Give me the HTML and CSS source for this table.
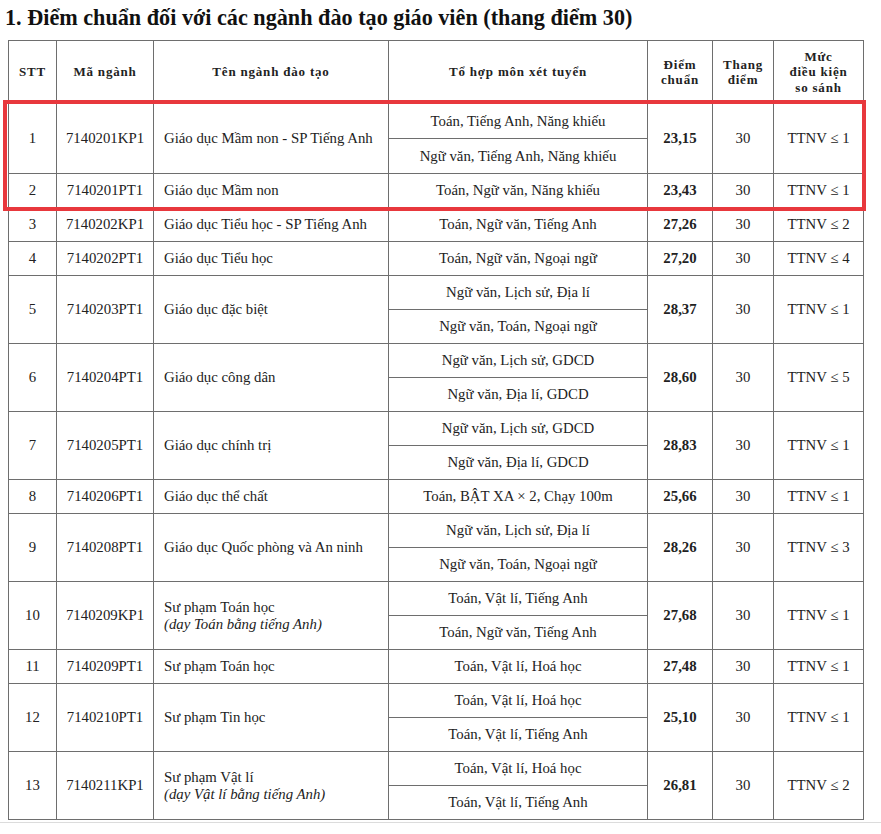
FILE: index.html
```html
<!DOCTYPE html>
<html lang="vi">
<head>
<meta charset="utf-8">
<title>Điểm chuẩn</title>
<link rel="stylesheet" href="styles.css">
</head>
<body>
<div class="page">
  <h1 class="title">1. Điểm chuẩn đối với các ngành đào tạo giáo viên (thang điểm 30)</h1>
  <div class="table-wrap">
    <table class="scores">
      <colgroup>
        <col class="c-stt"><col class="c-ma"><col class="c-ten"><col class="c-to"><col class="c-diem"><col class="c-thang"><col class="c-muc">
      </colgroup>
      <thead>
        <tr>
          <th>STT</th>
          <th>Mã ngành</th>
          <th>Tên ngành đào tạo</th>
          <th>Tổ hợp môn xét tuyển</th>
          <th>Điểm<br>chuẩn</th>
          <th>Thang<br>điểm</th>
          <th>Mức<br>điều kiện<br>so sánh</th>
        </tr>
      </thead>
      <tbody>
        <tr class="tall"><td rowspan="2">1</td><td rowspan="2">7140201KP1</td><td rowspan="2" class="name">Giáo dục Mầm non - SP Tiếng Anh</td><td>Toán, Tiếng Anh, Năng khiếu</td><td rowspan="2" class="score">23,15</td><td rowspan="2">30</td><td rowspan="2">TTNV ≤ 1</td></tr>
        <tr class="tall"><td>Ngữ văn, Tiếng Anh, Năng khiếu</td></tr>
        <tr><td>2</td><td>7140201PT1</td><td class="name">Giáo dục Mầm non</td><td>Toán, Ngữ văn, Năng khiếu</td><td class="score">23,43</td><td>30</td><td>TTNV ≤ 1</td></tr>
        <tr><td>3</td><td>7140202KP1</td><td class="name">Giáo dục Tiểu học - SP Tiếng Anh</td><td>Toán, Ngữ văn, Tiếng Anh</td><td class="score">27,26</td><td>30</td><td>TTNV ≤ 2</td></tr>
        <tr><td>4</td><td>7140202PT1</td><td class="name">Giáo dục Tiểu học</td><td>Toán, Ngữ văn, Ngoại ngữ</td><td class="score">27,20</td><td>30</td><td>TTNV ≤ 4</td></tr>
        <tr><td rowspan="2">5</td><td rowspan="2">7140203PT1</td><td rowspan="2" class="name">Giáo dục đặc biệt</td><td>Ngữ văn, Lịch sử, Địa lí</td><td rowspan="2" class="score">28,37</td><td rowspan="2">30</td><td rowspan="2">TTNV ≤ 1</td></tr>
        <tr><td>Ngữ văn, Toán, Ngoại ngữ</td></tr>
        <tr><td rowspan="2">6</td><td rowspan="2">7140204PT1</td><td rowspan="2" class="name">Giáo dục công dân</td><td>Ngữ văn, Lịch sử, GDCD</td><td rowspan="2" class="score">28,60</td><td rowspan="2">30</td><td rowspan="2">TTNV ≤ 5</td></tr>
        <tr><td>Ngữ văn, Địa lí, GDCD</td></tr>
        <tr><td rowspan="2">7</td><td rowspan="2">7140205PT1</td><td rowspan="2" class="name">Giáo dục chính trị</td><td>Ngữ văn, Lịch sử, GDCD</td><td rowspan="2" class="score">28,83</td><td rowspan="2">30</td><td rowspan="2">TTNV ≤ 1</td></tr>
        <tr><td>Ngữ văn, Địa lí, GDCD</td></tr>
        <tr><td>8</td><td>7140206PT1</td><td class="name">Giáo dục thể chất</td><td>Toán, BẬT XA × 2, Chạy 100m</td><td class="score">25,66</td><td>30</td><td>TTNV ≤ 1</td></tr>
        <tr><td rowspan="2">9</td><td rowspan="2">7140208PT1</td><td rowspan="2" class="name">Giáo dục Quốc phòng và An ninh</td><td>Ngữ văn, Lịch sử, Địa lí</td><td rowspan="2" class="score">28,26</td><td rowspan="2">30</td><td rowspan="2">TTNV ≤ 3</td></tr>
        <tr><td>Ngữ văn, Toán, Ngoại ngữ</td></tr>
        <tr><td rowspan="2">10</td><td rowspan="2">7140209KP1</td><td rowspan="2" class="name">Sư phạm Toán học<br><i>(dạy Toán bằng tiếng Anh)</i></td><td>Toán, Vật lí, Tiếng Anh</td><td rowspan="2" class="score">27,68</td><td rowspan="2">30</td><td rowspan="2">TTNV ≤ 1</td></tr>
        <tr><td>Toán, Ngữ văn, Tiếng Anh</td></tr>
        <tr><td>11</td><td>7140209PT1</td><td class="name">Sư phạm Toán học</td><td>Toán, Vật lí, Hoá học</td><td class="score">27,48</td><td>30</td><td>TTNV ≤ 1</td></tr>
        <tr><td rowspan="2">12</td><td rowspan="2">7140210PT1</td><td rowspan="2" class="name">Sư phạm Tin học</td><td>Toán, Vật lí, Hoá học</td><td rowspan="2" class="score">25,10</td><td rowspan="2">30</td><td rowspan="2">TTNV ≤ 1</td></tr>
        <tr><td>Toán, Vật lí, Tiếng Anh</td></tr>
        <tr><td rowspan="2">13</td><td rowspan="2">7140211KP1</td><td rowspan="2" class="name">Sư phạm Vật lí<br><i>(dạy Vật lí bằng tiếng Anh)</i></td><td>Toán, Vật lí, Hoá học</td><td rowspan="2" class="score">26,81</td><td rowspan="2">30</td><td rowspan="2">TTNV ≤ 2</td></tr>
        <tr><td>Toán, Vật lí, Tiếng Anh</td></tr>
      </tbody>
    </table>
    <div class="highlight"></div>
  </div>
  <div class="page-edge"></div>
</div>
</body>
</html>
```
FILE: styles.css
```css
html, body {
  margin: 0;
  padding: 0;
  background: #ffffff;
}
.page {
  width: 881px;
  font-family: "Liberation Serif", "Times New Roman", serif;
  color: #222;
}
.title {
  margin: 0;
  padding: 5px 0 0 5px;
  height: 34px;
  box-sizing: border-box;
  font-size: 22.2px;
  line-height: 26px;
  font-weight: bold;
  color: #111;
}
.table-wrap {
  position: relative;
  margin: 6px 0 0 8px;
  width: 855px;
}
.scores {
  border-collapse: collapse;
  width: 855px;
  table-layout: fixed;
  font-size: 14.8px;
}
.c-stt { width: 48px; }
.c-ma { width: 97px; }
.c-ten { width: 235px; }
.c-to { width: 259px; }
.c-diem { width: 65px; }
.c-thang { width: 61px; }
.c-muc { width: 90px; }
.scores th,
.scores td {
  border: 1px solid #6e6e6e;
  text-align: center;
  vertical-align: middle;
  padding: 0;
}
.scores th {
  height: 62px;
  font-size: 13px;
  line-height: 15.5px;
  font-weight: bold;
  color: #222;
  letter-spacing: 0.8px;
}
.scores td {
  height: 33px;
  line-height: 17px;
}
.scores tr.tall td {
  height: 34px;
}
.scores td.name {
  text-align: left;
  padding-left: 10px;
}
.scores td.score {
  font-weight: bold;
}
.highlight {
  position: absolute;
  left: -5px;
  top: 60px;
  width: 863px;
  height: 111px;
  border: 4px solid #e8383d;
  box-sizing: border-box;
  pointer-events: none;
}
.page-edge {
  margin-top: 2px;
  height: 1px;
  background: #dcdcdc;
}
```
